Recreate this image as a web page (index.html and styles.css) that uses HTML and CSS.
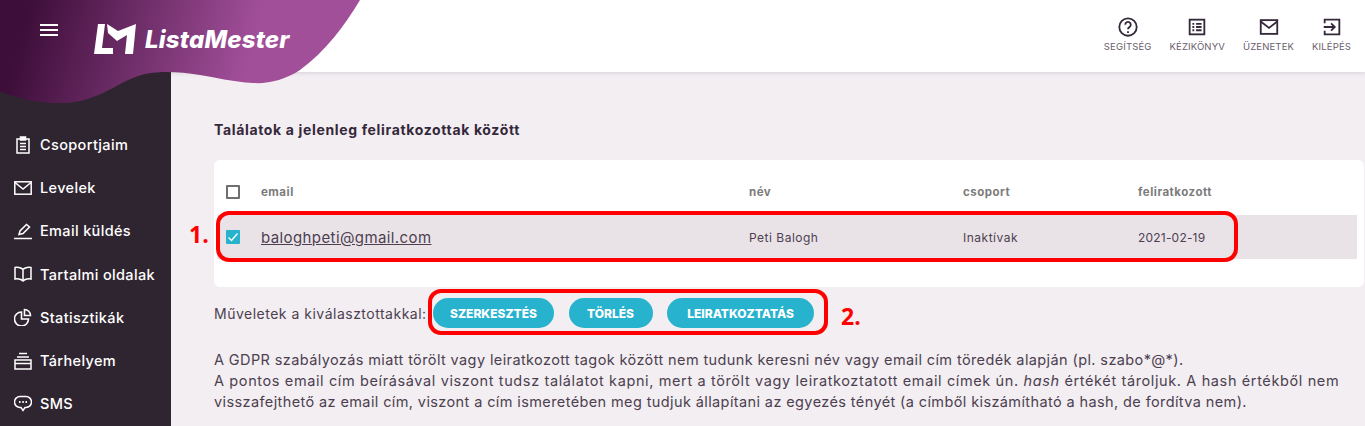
FILE: index.html
```html
<!DOCTYPE html>
<html lang="en">
<head>
    <meta charset="UTF-8">
    <title>ListaMester</title>
    <link rel="stylesheet" href="styles.css">
</head>
<body>
    <svg class="blob" width="360" height="104" viewBox="0 0 360 104">
        <defs>
            <linearGradient id="blobFill" gradientUnits="userSpaceOnUse" x1="25" y1="20" x2="245" y2="80">
                <stop offset="0" stop-color="#3d0e39"/>
                <stop offset="1" stop-color="#a24f9a"/>
            </linearGradient>
        </defs>
        <path fill="url(#blobFill)" d="M0 0H360C345 25 325 52 300 70C285 80 268 84 253 83C232 82 215 77 200 75C188 73 178 72 167 72C152 72 142 74 133 78C118 84 108 92 93 97C82 101 72 103 60 103C45 103 30 101 20 98C12 96 6 94 0 91Z"/>
    </svg>

    <header class="topbar">
        <div class="brand">
            <div class="hamburger"><span></span><span></span><span></span></div>
            <svg class="logo-mark" width="43" height="31" viewBox="0 0 43 31">
                <path fill="#fff" d="M4 0H11L8 24H19V30H0Z"/>
                <path fill="#fff" d="M13 0L24 7L42 0L39 30H31L33 11L23 17L14 9Z"/>
            </svg>
            <span class="logo-text">ListaMester</span>
        </div>
        <nav class="top-links">
            <a class="top-link">
                <svg width="22" height="22" viewBox="0 0 24 24" fill="none" stroke="#35283a" stroke-width="2"><circle cx="12" cy="12" r="9.500"/><path d="M9 9.500a3 3 0 1 1 4.500 2.600c-1 .6-1.500 1.200-1.500 2.400"/><path d="M12 16.500v2"/></svg>
                <span>Segítség</span>
            </a>
            <a class="top-link">
                <svg width="22" height="22" viewBox="0 0 24 24" fill="none" stroke="#35283a" stroke-width="2"><rect x="4" y="4" width="16" height="16"/><path d="M7 8.500h2M11 8.500h6M7 12h2M11 12h6M7 15.500h2M11 15.500h6"/></svg>
                <span>Kézikönyv</span>
            </a>
            <a class="top-link">
                <svg width="22" height="22" viewBox="0 0 24 24" fill="none" stroke="#35283a" stroke-width="2"><rect x="3" y="4.500" width="18" height="15"/><path d="M3 6l9 7 9-7"/></svg>
                <span>Üzenetek</span>
            </a>
            <a class="top-link">
                <svg width="22" height="22" viewBox="0 0 24 24" fill="none" stroke="#35283a" stroke-width="2"><path d="M4 8V4h16v16H4v-4"/><path d="M3 12h12M11 8l4 4-4 4"/></svg>
                <span>Kilépés</span>
            </a>
        </nav>
    </header>

    <div class="layout">
        <aside class="sidebar">
            <a class="side-item">
                <svg width="18" height="18" viewBox="0 0 18 18" fill="none" stroke="#fff" stroke-width="1.500"><rect x="3" y="3" width="12" height="14"/><rect x="6.500" y="1" width="5" height="3" fill="#fff"/><path d="M6 7.500h6M6 10.500h6M6 13.500h6"/></svg>
                <span>Csoportjaim</span>
            </a>
            <a class="side-item">
                <svg width="18" height="18" viewBox="0 0 18 18" fill="none" stroke="#fff" stroke-width="1.500"><rect x="0.800" y="2.800" width="16.400" height="12.400"/><path d="M1 3.500l8 6.500 8-6.500"/></svg>
                <span>Levelek</span>
            </a>
            <a class="side-item">
                <svg width="18" height="18" viewBox="0 0 18 18" fill="none" stroke="#fff" stroke-width="1.500"><path d="M5 12.500l1-3.500 6.500-6.500 3 2.500-6.500 6.500z"/><path d="M0 16.500h18"/></svg>
                <span>Email küldés</span>
            </a>
            <a class="side-item">
                <svg width="18" height="18" viewBox="0 0 18 18" fill="none" stroke="#fff" stroke-width="1.500"><path d="M9 4.500C7 2.500 3 2 1 2.500v11.500c2-.5 6 0 8 2 2-2 6-2.500 8-2V2.500C15 2 11 2.500 9 4.500zM9 4.500V16"/></svg>
                <span>Tartalmi oldalak</span>
            </a>
            <a class="side-item">
                <svg width="18" height="18" viewBox="0 0 18 18" fill="none" stroke="#fff" stroke-width="1.600"><path d="M7.500 4A7 7 0 1 0 14.500 11H7.500Z"/><path d="M10.500 1.500A6 6 0 0 1 16.500 7.500H10.500Z"/></svg>
                <span>Statisztikák</span>
            </a>
            <a class="side-item">
                <svg width="18" height="18" viewBox="0 0 18 18" fill="none" stroke="#fff" stroke-width="1.500"><rect x="1" y="8" width="16" height="9"/><path d="M1 11.500h16M3 5h12M5 1.500h8"/></svg>
                <span>Tárhelyem</span>
            </a>
            <a class="side-item">
                <svg width="18" height="18" viewBox="0 0 18 18" fill="none" stroke="#fff" stroke-width="1.500"><path d="M6 1.500h6a5.500 5.500 0 0 1 0 11h-1l-2 3-2-3H6a5.500 5.500 0 0 1 0-11z"/><path d="M5 7h1.500M8.300 7h1.500M11.500 7H13" stroke-width="2"/></svg>
                <span>SMS</span>
            </a>
        </aside>

        <main class="content">
            <h1 class="title">Találatok a jelenleg feliratkozottak között</h1>

            <section class="card">
                <div class="table-row table-head">
                    <div><span class="checkbox"></span></div>
                    <div>email</div>
                    <div>név</div>
                    <div>csoport</div>
                    <div>feliratkozott</div>
                </div>
                <div class="table-row selected">
                    <div><span class="checkbox checked">
                        <svg width="14" height="14" viewBox="0 0 14 14" fill="none" stroke="#fff" stroke-width="1.300"><path d="M2.500 7.500l3 3 6-7"/></svg>
                    </span></div>
                    <div><a class="email-link">baloghpeti@gmail.com</a></div>
                    <div>Peti Balogh</div>
                    <div>Inaktívak</div>
                    <div class="date">2021-02-19</div>
                </div>
                <!-- annotation over the row -->
                <div class="mark mark-row"></div>
                <div class="mark-num num-row">1.</div>
            </section>

            <div class="actions">
                <span class="actions-label">Műveletek a kiválasztottakkal:</span>
                <div class="buttons">
                    <button class="btn">Szerkesztés</button>
                    <button class="btn">Törlés</button>
                    <button class="btn">Leiratkoztatás</button>
                    <div class="mark mark-buttons"></div>
                    <div class="mark-num num-buttons">2.</div>
                </div>
            </div>

            <p class="note">
                A GDPR szabályozás miatt törölt vagy leiratkozott tagok között nem tudunk keresni név vagy email cím töredék alapján (pl. szabo*@*).<br>
                <span class="note-wide">A pontos email cím beírásával viszont tudsz találatot kapni, mert a törölt vagy leiratkoztatott email címek ún. <em>hash</em> értékét tároljuk. A hash értékből nem</span><br>
                visszafejthető az email cím, viszont a cím ismeretében meg tudjuk állapítani az egyezés tényét (a címből kiszámítható a hash, de fordítva nem).
            </p>
        </main>
    </div>
</body>
</html>
```
FILE: styles.css
```css
* {
    box-sizing: border-box;
}

body {
    margin: 0;
    height: 426px;
    overflow: hidden;
    background-color: #f2eef2;
    color: #4d3f50;
    font-family: "Inter", "Liberation Sans", sans-serif;
}

.blob {
    position: absolute;
    top: 0;
    left: 0;
    z-index: 2;
}

.topbar {
    display: flex;
    justify-content: space-between;
    height: 72px;
    background-color: #ffffff;
    box-shadow: 0 1px 4px rgba(60, 40, 60, 0.15);
    position: relative;
}

.brand {
    display: flex;
    align-items: center;
    position: relative;
    z-index: 3;
    padding-left: 40px;
    padding-top: 6px;
}

.hamburger {
    display: flex;
    flex-direction: column;
    gap: 3px;
    width: 18px;
    margin-right: 36px;
    margin-bottom: 18px;
}

.hamburger span {
    height: 2px;
    background-color: #ffffff;
}

.logo-mark {
    margin-right: 8px;
}

.logo-text {
    color: #ffffff;
    font-size: 24px;
    font-weight: 800;
    font-style: italic;
    letter-spacing: 0.2px;
}

.top-links {
    display: flex;
    gap: 18px;
    padding: 16px 14px 0 0;
}

.top-link {
    display: flex;
    flex-direction: column;
    align-items: center;
    gap: 3px;
    font-size: 9.5px;
    letter-spacing: 0.15px;
    text-transform: uppercase;
    color: #6a5d6d;
}

.layout {
    display: flex;
    height: 354px;
}

.sidebar {
    width: 171px;
    flex-shrink: 0;
    background-color: #2f2530;
    padding-top: 51px;
}

.side-item {
    display: flex;
    align-items: center;
    gap: 8px;
    height: 43.2px;
    padding-left: 14px;
    color: #ffffff;
    font-size: 14.5px;
    font-weight: 500;
    letter-spacing: 0.35px;
}

.content {
    flex: 1;
    padding: 50px 1px 0 43px;
    min-width: 0;
}

.title {
    margin: 0 0 22px;
    font-size: 14px;
    font-weight: 700;
    letter-spacing: 0.65px;
    line-height: 16px;
    color: #35283a;
}

.card {
    position: relative;
    height: 127px;
    padding: 16px 7px 0 3px;
    background-color: #ffffff;
    border-radius: 6px;
}

.table-row {
    display: grid;
    grid-template-columns: 35px 488px 214px 175px 1fr;
    align-items: center;
    padding-left: 9px;
    font-size: 12px;
    letter-spacing: 0.5px;
}

.table-head {
    height: 39px;
    padding-bottom: 7px;
    font-size: 11.5px;
    font-weight: 700;
    color: #7b7b7b;
}

.selected {
    height: 44px;
    background-color: #e9e3e8;
    color: #4d3f50;
}

.date {
    letter-spacing: 0.2px;
}

.checkbox {
    display: block;
    width: 14px;
    height: 14px;
    border: 2px solid #6f6f6f;
    border-radius: 1px;
}

.checkbox.checked {
    border: none;
    background-color: #27b2ce;
}

.checkbox svg {
    display: block;
}

.email-link {
    font-size: 15px;
    letter-spacing: 0.4px;
    text-decoration: underline;
}

.mark {
    position: absolute;
    border: 4px solid #ff0000;
    border-radius: 13px;
    pointer-events: none;
}

.mark-row {
    left: 2px;
    top: 51px;
    width: 1022px;
    height: 51px;
}

.mark-num {
    position: absolute;
    color: #ff0000;
    font-size: 23px;
    font-weight: 700;
    letter-spacing: 0;
    line-height: 26px;
    font-family: "Open Sans", sans-serif;
}

.num-row {
    left: -25px;
    top: 61px;
}

.actions {
    display: flex;
    align-items: center;
    height: 30px;
    margin-top: 11px;
    font-size: 14px;
    letter-spacing: 0.5px;
}

.actions-label {
    width: 219px;
    flex-shrink: 0;
    white-space: nowrap;
}

.buttons {
    display: flex;
    gap: 14.5px;
    position: relative;
}

.btn {
    height: 30px;
    padding: 0;
    border: none;
    border-radius: 15px;
    background-color: #27b2ce;
    color: #ffffff;
    font-family: inherit;
    font-size: 12px;
    font-weight: 800;
    letter-spacing: 0;
    text-transform: uppercase;
}

.btn:nth-child(1) {
    width: 121px;
}

.btn:nth-child(2) {
    width: 84px;
}

.btn:nth-child(3) {
    width: 147px;
}

.mark-buttons {
    left: -5px;
    top: -9px;
    width: 400px;
    height: 46px;
}

.num-buttons {
    left: 408px;
    top: 5px;
}

.note {
    margin: 21px 0 0;
    font-size: 14.5px;
    letter-spacing: 0.39px;
    line-height: 21px;
    white-space: nowrap;
}

.note-wide {
    letter-spacing: 0.62px;
}
```
